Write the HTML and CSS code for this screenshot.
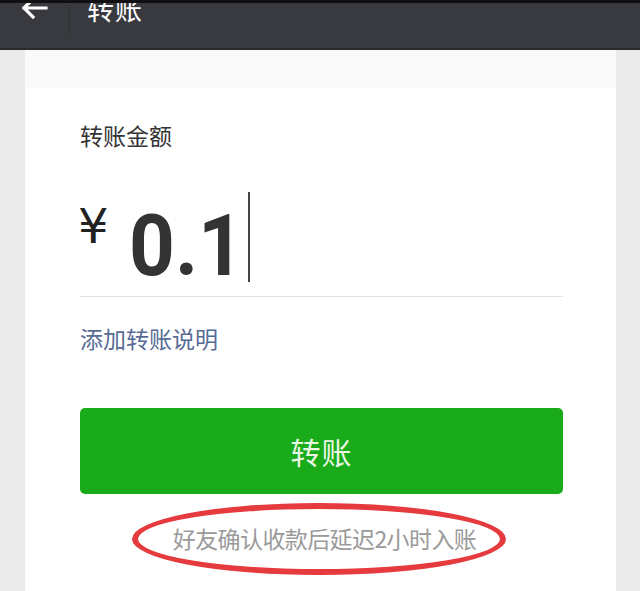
FILE: index.html
```html
<!DOCTYPE html>
<html lang="zh">
<head>
<meta charset="utf-8">
<link rel="stylesheet" href="styles.css">
</head>
<body>
<div class="topbar">
  <div class="back">
    <svg width="26" height="20" viewBox="0 0 26 20"><path d="M2 9 H24 M2 9 L11 0 M2 9 L11 18" stroke="#fff" stroke-width="3.2" fill="none" stroke-linecap="square"/></svg>
  </div>
  <div class="sep"></div>
  <div class="title">转账</div>
</div>
<div class="page">
  <div class="card">
    <div class="cardtop"></div>
    <div class="content">
      <div class="label">转账金额</div>
      <div class="amount">
        <span class="yen">¥</span>
        <span class="num">0.1</span>
        <span class="cursor"></span>
      </div>
      <div class="link">添加转账说明</div>
      <div class="btn">转账</div>
      <div class="note">
        <span class="ring"></span>
        <span class="notetext">好友确认收款后延迟2小时入账</span>
      </div>
    </div>
  </div>
</div>
</body>
</html>
```

FILE: styles.css
```css
html, body {
  margin: 0;
  padding: 0;
  background: #ebebeb;
  font-family: "Noto Sans CJK SC", "Noto Sans", sans-serif;
  overflow: hidden;
}
.topbar {
  height: 45px;
  background: #393a3f;
  border-top: 3px solid #101012;
  border-bottom: 2px solid #2a2a2e;
  display: flex;
  align-items: flex-start;
  position: relative;
  overflow: hidden;
}
.back {
  margin-left: 22px;
  margin-top: -4px;
  width: 26px;
  height: 20px;
}
.sep {
  width: 1px;
  height: 30px;
  background: #2f3034;
  margin-left: 21px;
  margin-top: 2px;
}
.title {
  color: #fff;
  font-size: 27px;
  line-height: 27px;
  margin-left: 17px;
  margin-top: -8px;
  letter-spacing: 1px;
}
.page {
  padding: 0 24px 0 25px;
}
.card {
  background: #fff;
  height: 560px;
}
.cardtop {
  height: 38px;
  background: #fafafa;
}
.content {
  padding: 0 53px 0 55px;
  display: flex;
  flex-direction: column;
}
.label {
  margin-top: 32px;
  font-size: 23px;
  line-height: 30px;
  color: #333;
}
.amount {
  margin-top: 40px;
  height: 106px;
  border-bottom: 1px solid #e3e3e3;
  display: flex;
  align-items: flex-start;
  position: relative;
}
.yen {
  font-family: "DejaVu Sans", sans-serif;
  font-size: 48px;
  line-height: 48px;
  color: #222;
  margin-top: 12px;
  margin-left: -2px;
}
.num {
  font-family: "Roboto", "DejaVu Sans Condensed", sans-serif;
  font-weight: 700;
  font-size: 86px;
  line-height: 86px;
  color: #333;
  margin-left: 20px;
  margin-top: 13px;
  letter-spacing: 0px;
  transform: scaleX(0.93);
  transform-origin: left center;
}
.cursor {
  position: absolute;
  left: 168px;
  top: 2px;
  width: 2px;
  height: 90px;
  background: #444;
}
.link {
  margin-top: 26px;
  font-size: 23px;
  line-height: 30px;
  color: #576b95;
}
.btn {
  margin-top: 55px;
  height: 86px;
  background: #1aab1b;
  border-radius: 5px;
  color: #eaf7e4;
  font-size: 30px;
  display: flex;
  align-items: center;
  justify-content: center;
  letter-spacing: 1px;
}
.note {
  margin-top: 10px;
  height: 88px;
  display: flex;
  justify-content: center;
  align-items: center;
  position: relative;
}
.notetext {
  font-size: 23px;
  color: #9a9a9a;
  margin-left: 6px;
  margin-top: -20px;
  letter-spacing: -0.6px;
}
.ring {
  position: absolute;
  left: 52px;
  top: -1px;
  width: 362px;
  height: 60px;
  border: 6px solid #e53a3e;
  border-radius: 50%;
}
```
